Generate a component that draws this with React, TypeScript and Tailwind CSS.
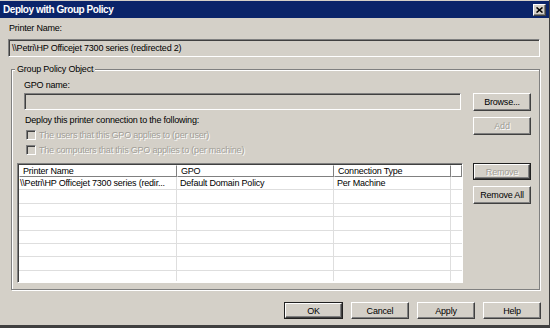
import React from 'react'

const raised =
  'border border-t-white border-l-white border-r-[#404040] border-b-[#404040] shadow-[inset_-1px_-1px_0_#808080]'
const sunken =
  'border border-t-[#808080] border-l-[#808080] border-r-white border-b-white shadow-[inset_1px_1px_0_#404040]'
const disabledText = 'text-[#a19e97] [text-shadow:1px_1px_0_#fff]'

function Button({
  label,
  className = '',
  disabled = false,
  framed = false,
}: {
  label: string
  className?: string
  disabled?: boolean
  framed?: boolean
}) {
  const inner = (
    <div
      className={`flex h-full w-full items-center justify-center bg-[#d4d0c8] ${raised} ${
        disabled ? disabledText : 'text-black'
      }`}
    >
      {label}
    </div>
  )
  if (framed) {
    return <div className={`border border-[#202020] ${className}`}>{inner}</div>
  }
  return <div className={className}>{inner}</div>
}

function Checkbox({ label }: { label: string }) {
  return (
    <div className="flex h-[12px] items-center pl-[9px]">
      <div className={`h-[10px] w-[10px] bg-[#d4d0c8] ${sunken}`} />
      <span className={`ml-[3px] ${disabledText}`}>{label}</span>
    </div>
  )
}

const rowHeights = ['h-[13px]', 'h-[14px]', 'h-[13px]', 'h-[14px]', 'h-[13px]', 'h-[13px]', 'h-[14px]', 'h-[10px]']

const columns = [
  { label: 'Printer Name', w: 'w-[158px]' },
  { label: 'GPO', w: 'w-[157px]' },
  { label: 'Connection Type', w: 'w-[117px]' },
  { label: '', w: 'flex-1' },
]

const rows = [['\\\\Petri\\HP Officejet 7300 series (redir...', 'Default Domain Policy', 'Per Machine']]

export default function App() {
  return (
    <div className="flex h-[328px] w-[550px] flex-col overflow-hidden border-b-[3px] border-r border-b-[#404040] border-r-[#404040] bg-[#d4d0c8] font-['Liberation_Sans',Arial,sans-serif] text-[9px] leading-[12px] tracking-[-0.2px] text-black">
      {/* Title bar */}
      <div className="mt-[1px] flex h-[17px] shrink-0 items-center bg-[#0a246a] pl-[3px] pr-[3px]">
        <span className="flex-1 text-[10px] font-bold tracking-[-0.45px] text-white">Deploy with Group Policy</span>
        <div className={`flex h-[12px] w-[13px] items-center justify-center bg-[#d4d0c8] ${raised}`}>
          <svg width="7" height="6" viewBox="0 0 7 6">
            <path d="M0.5 0.5 L6.5 5.5 M6.5 0.5 L0.5 5.5" stroke="#000" strokeWidth="1.6" />
          </svg>
        </div>
      </div>

      {/* Printer name */}
      <div className="mt-[4px] pl-[9px]">Printer Name:</div>
      <div className={`ml-[8px] mr-[9px] mt-[5px] flex h-[18px] items-center pl-[3px] ${sunken}`}>
        \\Petri\HP Officejet 7300 series (redirected 2)
      </div>

      {/* Group Policy Object */}
      <fieldset className="ml-[11px] mr-[9px] mt-[6px] border border-[#808080] shadow-[inset_1px_1px_0_#fff,1px_1px_0_#fff]">
        <legend className="ml-[3px] bg-[#d4d0c8] px-[2px] leading-[12px]">Group Policy Object</legend>
        <div className="flex gap-[10px] pb-[6px] pl-[5px] pr-[8px]">
          {/* Left column */}
          <div className="flex w-[446px] flex-col">
            <div className="mt-[4px] pl-[7px]">GPO name:</div>
            <div className={`ml-[7px] mr-[2px] mt-[2px] h-[17px] ${sunken}`} />
            <div className="mt-[4px] pl-[8px]">Deploy this printer connection to the following:</div>
            <div className="mt-[3px]">
              <Checkbox label="The users that this GPO applies to (per user)" />
            </div>
            <div className="mt-[3px]">
              <Checkbox label="The computers that this GPO applies to (per machine)" />
            </div>

            {/* List view */}
            <div className={`mt-[7px] flex h-[120px] flex-col bg-white ${sunken}`}>
              <div className="ml-[1px] mt-[1px] flex h-[12px] shrink-0">
                {columns.map((c, i) => (
                  <div key={i} className={`${c.w} flex items-center pl-[3px] ${raised} shadow-none border-b-[#808080] border-r-[#808080]`}>
                    {c.label}
                  </div>
                ))}
              </div>
              <div className="ml-[1px] flex flex-col">
                {rowHeights.map((h, r) => (
                  <div key={r} className={`flex ${h} ${r < rowHeights.length - 1 ? 'border-b border-[#dedede]' : ''}`}>
                    {columns.map((c, i) => (
                      <div
                        key={i}
                        className={`${c.w} flex items-center overflow-hidden whitespace-nowrap pl-[1px] ${
                          i < 3 ? 'border-r border-[#dedede]' : ''
                        } ${i === 0 ? '' : 'pl-[3px]'}`}
                      >
                        {rows[r]?.[i] ?? ''}
                      </div>
                    ))}
                  </div>
                ))}
              </div>
            </div>
          </div>

          {/* Right column */}
          <div className="flex w-[58px] flex-col">
            <Button label="Browse..." className="mt-[18px] h-[18px]" />
            <Button label="Add" className="mt-[6px] h-[18px]" disabled />
            <Button label="Remove" className="mt-[28px] h-[17px]" disabled framed />
            <Button label="Remove All" className="mt-[6px] h-[18px]" />
          </div>
        </div>
      </fieldset>

      {/* Dialog buttons */}
      <div className="mt-[12px] flex justify-end gap-[8px] pr-[8px]">
        <Button label="OK" className="h-[17px] w-[59px]" framed />
        <Button label="Cancel" className="h-[17px] w-[58px]" />
        <Button label="Apply" className="h-[17px] w-[58px]" />
        <Button label="Help" className="h-[17px] w-[58px]" />
      </div>
    </div>
  )
}
